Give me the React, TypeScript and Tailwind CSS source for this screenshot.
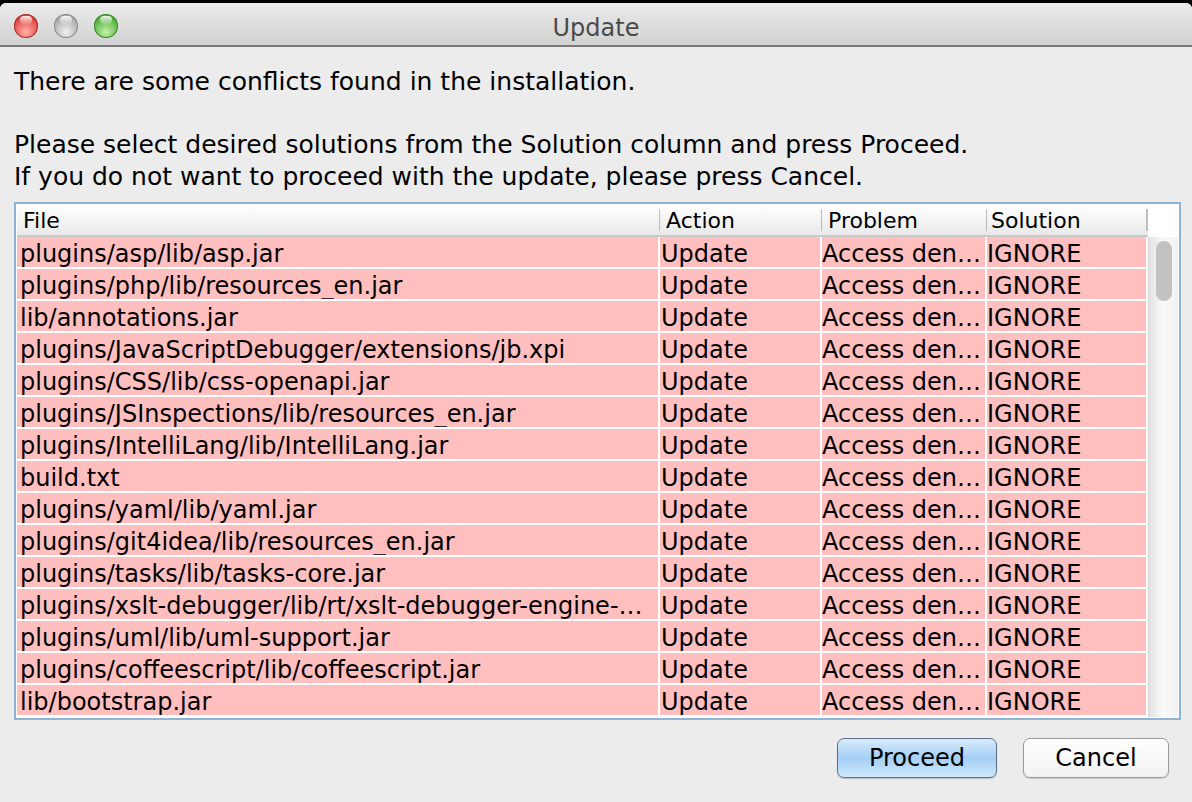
import React from "react";

const rows = [
  "plugins/asp/lib/asp.jar",
  "plugins/php/lib/resources_en.jar",
  "lib/annotations.jar",
  "plugins/JavaScriptDebugger/extensions/jb.xpi",
  "plugins/CSS/lib/css-openapi.jar",
  "plugins/JSInspections/lib/resources_en.jar",
  "plugins/IntelliLang/lib/IntelliLang.jar",
  "build.txt",
  "plugins/yaml/lib/yaml.jar",
  "plugins/git4idea/lib/resources_en.jar",
  "plugins/tasks/lib/tasks-core.jar",
  "plugins/xslt-debugger/lib/rt/xslt-debugger-engine-…",
  "plugins/uml/lib/uml-support.jar",
  "plugins/coffeescript/lib/coffeescript.jar",
  "lib/bootstrap.jar",
];

function Light({ from, to, border }: { from: string; to: string; border: string }) {
  return (
    <div
      className="w-[24px] h-[24px] rounded-full relative"
      style={{
        background: `radial-gradient(circle at 50% 75%, ${to} 0%, ${from} 70%)`,
        boxShadow: `inset 0 0 0 1px ${border}`,
      }}
    >
      <div className="absolute left-[6px] top-[2px] w-[12px] h-[8px] rounded-full bg-gradient-to-b from-white/90 to-white/10" />
    </div>
  );
}

export default function App() {
  const font = { fontFamily: '"DejaVu Sans", "Liberation Sans", sans-serif' };
  return (
    <div className="w-[1192px] h-[802px] bg-black pt-[3px] overflow-hidden" style={font}>
      <div className="h-[799px] bg-[#ececec] rounded-t-[6px] flex flex-col overflow-hidden">
        {/* title bar */}
        <div className="h-[44px] shrink-0 bg-gradient-to-b from-[#ebebeb] to-[#d2d2d2] border-b-2 border-[#7a7a7a] relative flex items-center px-[14px] pt-[3px] gap-[16px]">
          <Light from="#e0443e" to="#ffb0a8" border="#a8302a" />
          <Light from="#a9a9a9" to="#f0f0f0" border="#8a8a8a" />
          <Light from="#4fb03a" to="#c4f0a8" border="#3a8a2a" />
          <div className="absolute inset-0 pt-[7px] flex items-center justify-center text-[24px] text-[#4a4a4a] pointer-events-none">
            Update
          </div>
        </div>

        {/* content */}
        <div className="flex-1 flex flex-col pl-[14px] pr-[11px] pt-[18px]">
          <div className="text-[25px] leading-[32px] text-black">
            <div className="pt-[1px]">There are some conflicts found in the installation.</div>
            <div className="h-[31px]" />
            <div>Please select desired solutions from the Solution column and press Proceed.</div>
            <div>If you do not want to proceed with the update, please press Cancel.</div>
          </div>

          {/* table */}
          <div className="mt-[9px] w-[1167px] border-2 border-[#8db3d6] bg-white">
            <div className="border border-white flex">
              <div className="flex flex-col w-[1131px]">
                {/* header */}
                <div className="h-[32px] flex bg-gradient-to-b from-white to-[#e9e9e9] border-b-2 border-[#c9c9c9] text-[22px] text-black">
                  <div className="w-[643px] pl-[6px] flex items-center border-r border-[#bdbdbd] my-[4px]">File</div>
                  <div className="w-[162px] pl-[6px] flex items-center border-r border-[#bdbdbd] my-[4px]">Action</div>
                  <div className="w-[165px] pl-[6px] flex items-center border-r border-[#bdbdbd] my-[4px]">Problem</div>
                  <div className="w-[161px] pl-[4px] flex items-center border-r-2 border-[#bdbdbd] my-[4px]">Solution</div>
                </div>
                {rows.map((r) => (
                  <div key={r} className="h-[32px] flex text-[24px] text-black">
                    <div className="w-[641px] h-[30px] bg-[#ffbfbf] mr-[2px] pl-[3px] pt-[2px] leading-[30px] whitespace-nowrap overflow-hidden">
                      {r}
                    </div>
                    <div className="w-[160px] h-[30px] bg-[#ffbfbf] mr-[2px] pl-[1px] pt-[2px] leading-[30px] whitespace-nowrap overflow-hidden">
                      Update
                    </div>
                    <div className="w-[163px] h-[30px] bg-[#ffbfbf] mr-[2px] pl-[0px] pt-[2px] leading-[30px] whitespace-nowrap overflow-hidden">
                      Access den…
                    </div>
                    <div className="w-[159px] h-[30px] bg-[#ffbfbf] pl-[0px] pt-[2px] leading-[30px] whitespace-nowrap overflow-hidden">
                      IGNORE
                    </div>
                  </div>
                ))}
              </div>
              {/* scrollbar */}
              <div className="flex-1 flex flex-col">
                <div className="h-[32px] bg-white" />
                <div className="flex-1 bg-gradient-to-r from-[#e2e2e2] via-[#fafafa] to-[#f0f0f0] border-l border-[#d8d8d8] relative">
                  <div className="absolute left-[7px] top-[4px] w-[16px] h-[60px] rounded-full bg-[#c2c2c2]" />
                </div>
              </div>
            </div>
          </div>

          {/* buttons */}
          <div className="flex justify-end gap-[26px] mt-[18px] pr-[12px]">
            <button className="w-[160px] h-[40px] rounded-[7px] border border-[#5d6f88] bg-gradient-to-b from-[#d8ebfc] via-[#a4cff5] to-[#cfe8fd] text-[24px] text-black shadow-[0_1px_1px_rgba(0,0,0,0.2)]">
              Proceed
            </button>
            <button className="w-[146px] h-[40px] rounded-[7px] border border-[#9a9a9a] bg-gradient-to-b from-white to-[#f2f2f2] text-[24px] text-black shadow-[0_1px_1px_rgba(0,0,0,0.15)]">
              Cancel
            </button>
          </div>
        </div>
      </div>
    </div>
  );
}
